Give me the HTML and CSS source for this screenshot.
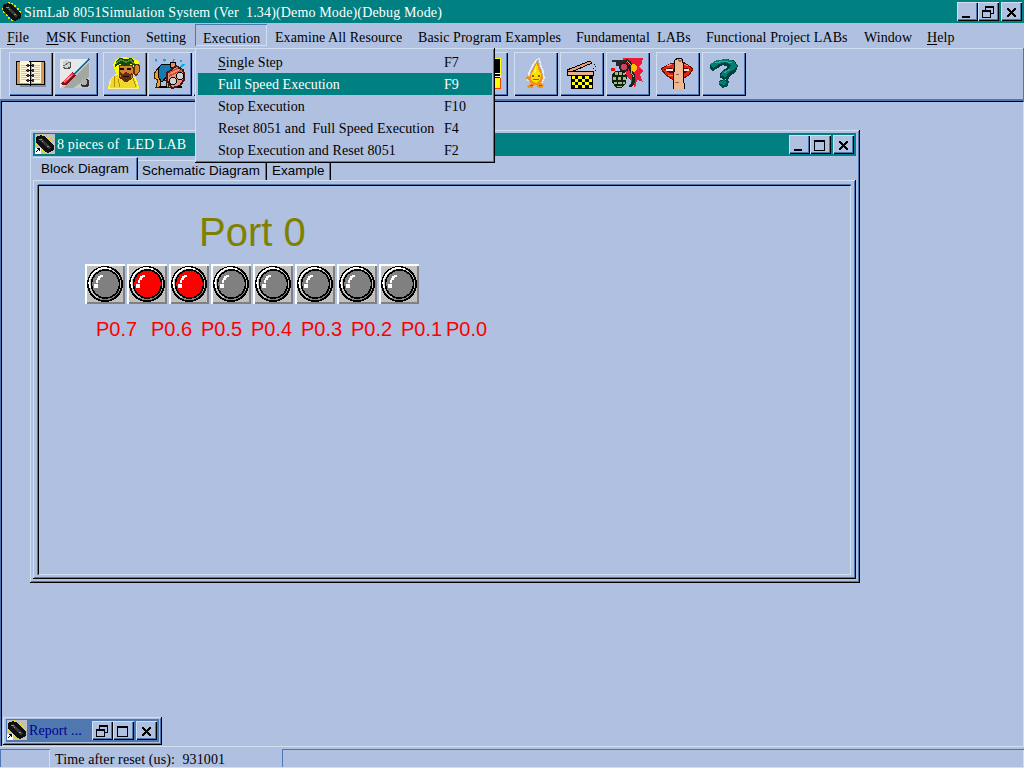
FILE: index.html
```html
<!DOCTYPE html>
<html lang="en">
<head>
<meta charset="utf-8">
<title>SimLab 8051 Simulation System</title>
<link rel="stylesheet" href="styles.css">
</head>
<body>
<svg class="defs" width="0" height="0" aria-hidden="true">
  <symbol id="chip" viewBox="0 0 20 20">
    <path d="M6 0h2v2H6zM9 1h2v2H9zM12 3h2v2h-2zM15 6h2v2h-2zM17 9h2v2h-2zM0 6h2v2H0zM1 9h2v2H1zM4 12h2v2H4zM6 15h2v2H6zM9 17h2v2H9z" fill="#e8e000"/>
    <path d="M1 3 6 1 11 3 19 12 19 16 13 19 9 17 1 8Z" fill="#101010"/>
    <path d="M4 5 7 4 16 14 13 15Z" fill="#383838"/>
    <path d="M4 5h3v1H4zM7 7h1v1H7zM12 12h2v1h-2z" fill="#909090"/>
  </symbol>
  <symbol id="chip-link" viewBox="0 0 20 20">
    <path d="M0 0h20v20H0z" fill="#c0c0c0"/>
    <use href="#chip" width="20" height="20"/>
    <path d="M0 14h6v6H0z" fill="#fff"/>
    <path d="M1 18h1v-1h1v-1h1v1h1v-3H2v1h1v1H2v1H1z" fill="#000"/>
  </symbol>
  <symbol id="min" viewBox="0 0 20 18"><path d="M5 13h8v2H5z"/></symbol>
  <symbol id="max" viewBox="0 0 20 18"><path fill-rule="evenodd" d="M4 4h11v11H4zM5 6v8h9V6z"/></symbol>
  <symbol id="restore" viewBox="0 0 20 18"><path fill-rule="evenodd" d="M7 3h9v8h-3v4H4V7h3zM8 5v2h5v3h2V5zM5 9v5h7V9z"/></symbol>
  <symbol id="close" viewBox="0 0 20 18"><path d="M6 5h2v1H6zM13 5h2v1h-2zM6 6h3v1H6zM12 6h3v1h-3zM7 7h3v1H7zM11 7h3v1h-3zM8 8h5v1H8zM9 9h3v1H9zM8 10h5v1H8zM7 11h3v1H7zM11 11h3v1h-3zM6 12h3v1H6zM12 12h3v1h-3zM6 13h2v1H6zM13 13h2v1h-2z"/></symbol>
  <symbol id="led" viewBox="0 0 40 40">
    <path d="M0 0h40v40H0z" fill="#808080"/><path d="M0 0h40v2H38v36H2v2H0z" fill="#fff"/><path d="M2 2h36v36H2z" fill="#c0c0c0"/>
    <circle cx="20" cy="20" r="17" fill="#c0c0c0" stroke="#000" stroke-width="2"/>
    <path d="M5 24A15.4 15.4 0 0 1 26 5.5" fill="none" stroke="#fff" stroke-width="1.6"/>
    <path d="M34 26A15.4 15.4 0 0 1 13 34" fill="none" stroke="#808080" stroke-width="1.5"/>
    <circle cx="20.5" cy="20" r="14" fill="currentColor" stroke="#000" stroke-width="1.6"/>
    <path d="M9 20h4v4H9zM11 16h2v3h-2zM12 14h3v2h-3zM13 12h3v2h-3zM15 11h3v2h-3z" fill="#fff"/>
  </symbol>
</svg>

<header class="titlebar">
  <svg class="app-icon"><use href="#chip"/></svg>
  <span class="title main-title">SimLab 8051Simulation System (Ver&nbsp; 1.34)(Demo Mode)(Debug Mode)</span>
  <div class="controls">
    <button><svg><use href="#min"/></svg></button><button><svg><use href="#restore"/></svg></button><button class="apart"><svg><use href="#close"/></svg></button>
  </div>
</header>

<nav class="menubar">
  <span class="m-file"><u>F</u>ile</span><span class="m-msk"><u>M</u>SK Function</span><span class="m-setting">Setting</span><span class="m-exec open">Execution</span><span class="m-exam">Examine All Resource</span><span class="m-basic">Basic Program Examples</span><span class="m-fund">Fundamental&nbsp; LABs</span><span class="m-func">Functional Project LABs</span><span class="m-window">Window</span><span class="m-help"><u>H</u>elp</span>
</nav>

<div class="toolbar">
  <button><svg viewBox="0 0 32 32">
    <path d="M5 6h26v24H5z" fill="#8090a0"/><path d="M1 4h29v24H1z" fill="#000"/><path d="M2 5h27v22H2z" fill="#d89858"/>
    <path d="M5 4h8l2 2v21l-2-1H5zM17 5h9v21h-9z" fill="#fff8d8"/>
    <path d="M6 8h6M6 10h6M6 12h6M6 14h6M6 16h6M6 18h6M6 20h6M6 22h6M19 8h6M19 10h6M19 12h6M19 14h6M19 16h6M19 18h6M19 20h6M19 22h6" stroke="#c0c0f0"/>
    <path d="M15 4h1v25h-1zM11 8h4v1h-4zM16 8h3v1h-3zM11 13h4v1h-4zM16 13h3v1h-3zM11 18h4v1h-4zM16 18h3v1h-3zM11 23h4v1h-4zM16 23h3v1h-3z" fill="#000"/>
    <path d="M12 7h2v3h-2zM17 7h2v3h-2zM12 12h2v3h-2zM17 12h2v3h-2zM12 17h2v3h-2zM17 17h2v3h-2zM12 22h2v3h-2zM17 22h2v3h-2z" fill="#303048"/>
  </svg></button>
  <button><svg viewBox="0 0 32 32">
    <path d="M1 2h30v29H1z" fill="#c8c8c8"/><path d="M1 2h29L2 31H1z" fill="#e8e8e8"/><path d="M30 5v15L14 31H5z" fill="#a0a8a0"/>
    <circle cx="8" cy="8" r="4.5" fill="#505050"/><circle cx="7.5" cy="7" r="3.8" fill="#d0d0d0"/><path d="M4 9 11 5" stroke="#707070"/>
    <circle cx="26" cy="26" r="4.5" fill="#303030"/><circle cx="25" cy="25" r="3" fill="#b0b0b0"/>
    <path d="M14 18 30 2" stroke="#306080" stroke-width="2"/><path d="M14 17 29 2" stroke="#80d0e8"/>
    <path d="M2 26 13 15l4 4L7 28H3z" fill="#801020"/><path d="M3 25 13 16l2 2L6 26z" fill="#f03840"/><path d="M5 25 13 18" stroke="#ffa0a0"/>
  </svg></button>
  <button class="split"><svg viewBox="0 0 32 32">
    <path d="M8 2 14 0 24 1 31 4 32 15 26 19 30 26 31 31H0L2 22 8 16 5 8Z" fill="#ffff00"/>
    <path d="M8 17 3 22 1 31h29l-3-11-8 3z" fill="#f0d828" stroke="#fff090"/>
    <path d="M11 8h13l2 5-2 8-6 4-7-5z" fill="#d08038" stroke="#603000"/><path d="M12 15 15 17 18 15 22 17 24 15 23 22 18 25 13 21z" fill="#603010"/>
    <path d="M8 4 12 1 18 2 24 1 26 4 27 9 23 7 17 9 12 7 7 10z" fill="#104810"/><path d="M8 6 13 3 18 5 23 3 26 7" fill="none" stroke="#50902c" stroke-width="1.5"/>
    <path d="M12 11h4v2h-4zM19 11h4v2h-4zM15 19h6v1h-6z" fill="#200800"/>
    <path d="M26 9 29 7 32 9 31 15 28 19 26 16z" fill="#d08038" stroke="#603000"/>
    <path d="M6 19v11M10 22l2 8M25 21l3 9" stroke="#b09000"/>
  </svg></button>
  <button><svg viewBox="0 0 32 32">
    <path d="M2 2h2v3H3zM10 2h3l-1 4-2-2zM20 2h2l-2 4h-1zM27 3h2v2h-2zM29 7h3l-3 3h-2z" fill="#10a8d8"/>
    <path d="M1 17 5 11l8-1 3 20h-3v-7H8l-1 7H3l2-7-4-2z" fill="#f0a028" stroke="#302000"/>
    <path d="M5 12 8 8l8-1 6 5-8 7-5 6-4-5z" fill="#1878b0" stroke="#000"/><circle cx="20" cy="8" r="3" fill="#e09060" stroke="#000"/>
    <path d="M14 16 23 9l7 4 2 8-5 8-8 2-5-7z" fill="#e89078" stroke="#401818" stroke-width="2"/>
    <path d="M16 16l9-5M16 19l13-6" stroke="#d04830" stroke-width="1.5"/>
    <circle cx="20" cy="24" r="3.5" fill="#d0d0d0" stroke="#000"/><circle cx="27" cy="19" r="3.5" fill="#d0d0d0" stroke="#000"/>
    <path d="M6 30h8M24 30h5" stroke="#000" stroke-width="2"/>
  </svg></button>
  <button></button>
  <button class="far"><svg viewBox="0 0 32 32"><path d="M0 1h32v31H0z" fill="#ff0"/><path d="M0 2h31v19H0z" fill="#000"/><path d="M26 16h6M25 19h7" stroke="#fff"/><path d="M31 21v10H0" fill="none" stroke="#f04000"/></svg></button>
  <button class="wide-gap"><svg viewBox="0 0 32 32">
    <path d="M20 1 22 9 24 14 25 21 23 26M18 2 14 8 10 16 9 24" fill="none" stroke="#e8ecf0" stroke-width="1.5"/>
    <path d="M19 2 20 9 23 15 24 21 22 26 25 28 24 31 19 31 18 28 15 28 14 31 9 31 8 29 12 27 10 23 7 22 8 19 11 20 12 14 16 8z" fill="#f09020"/>
    <path d="M18 6 19 12 22 17 21 23 17 26 12 23 12 18z" fill="#f8e000"/><path d="M17 8 17 14 14 18z" fill="#fff060"/>
    <path d="M13 18h2v2h-2zM19 18h2v2h-2zM14 22h6v1h-6zM11 28h3v1h-3zM20 28h3v1h-3z" fill="#a05010"/>
  </svg></button>
  <button class="gap2"><svg viewBox="0 0 32 32">
    <path d="M2 13 25 4 27 6 4 16z" fill="#e0a078" stroke="#000"/><path d="M2 14h26v4H2z" fill="#e8b090" stroke="#000"/>
    <path d="M6 18h22v14H6z" fill="#000"/><path d="M7 19h3v3H7zM13 19h4v3h-4zM20 19h4v3h-4zM10 22h3v3h-3zM17 22h3v3h-3zM24 22h3v3h-3zM7 25h3v3H7zM13 25h4v3h-4zM20 25h4v3h-4zM10 28h3v3h-3zM17 28h3v3h-3zM24 28h3v3h-3z" fill="#ff0"/>
    <path d="M29 7h1v1h-1zM30 9h1v1h-1zM28 11h1v1h-1zM30 13h1v1h-1z"/>
  </svg></button>
  <button class="gap2"><svg viewBox="0 0 32 32">
    <path d="M12 1h20l-1 5-3 4 4 4-3 4 3 7-6-2-2 8-4-7-4-4z" fill="#f01838"/><path d="M15 4h14M17 8h12M18 12h12M20 16h8M20 20h8" stroke="#903080" stroke-dasharray="1 2"/><circle cx="22" cy="11" r="4" fill="#ffc000"/>
    <path d="M1 3h5v2H1zM5 3h10v3H9v3H5z" fill="#282828"/><path d="M0 11h4v3H0z" fill="#f00"/>
    <circle cx="13" cy="10" r="4" fill="#d04060" stroke="#202020" stroke-width="2"/>
    <path d="M15 3 19 6 20 14 23 19 22 26 19 30" fill="none" stroke="#182818" stroke-width="3"/><path d="M16 4 20 8 20 15 23 20" fill="none" stroke="#b0b890"/>
    <path d="M4 14h9l3 5-1 7-4 5H5l-4-6V18z" fill="#102010"/>
    <path d="M4 15h3v3H4zM8 15h3v3H8zM12 16h2v2h-2zM2 20h3v3H2zM7 20h3v3H7zM12 20h3v3h-3zM3 25h3v2H3zM7 25h4v2H7zM12 25h2v2h-2zM6 29h5v1H6z" fill="#a8b880"/>
  </svg></button>
  <button class="wide-gap"><svg viewBox="0 0 32 32">
    <path d="M0 12 5 9 11 6 16 8 22 5 28 9 32 12 28 18 21 22 11 22 5 18z" fill="#e02810" stroke="#601000"/>
    <path d="M2 12 9 11 16 13 24 11 30 12 24 16 9 16z" fill="#600000"/><path d="M5 12h7v2H5zM22 12h6v2h-6z" fill="#f0e8e0"/><path d="M6 9 11 7M23 7 27 9M7 18h5" stroke="#ff8870"/>
    <path d="M12 32V24l1-9 1-12 3-2 4 1 1 4v13l1 7v6z" fill="#f0b890" stroke="#000"/><path d="M17 2 19 5 21 2M15 17h3M14 25h4" fill="none" stroke="#a06038"/>
  </svg></button>
  <button class="gap2"><svg viewBox="0 0 32 32">
    <path d="M3 8 8 4 17 2 27 3 31 9 29 15 23 19 21 23 13 21 13 16 18 12 21 10 16 8 11 11 6 14 3 12z" fill="#004040"/>
    <path d="M3 7 10 3 19 2 27 4 30 9 26 13 21 16 19 20 14 19 15 15 22 12 24 8 18 5 12 7 6 11z" fill="#008070"/><path d="M8 6 17 4 25 6M23 12l-6 4" fill="none" stroke="#38a898"/>
    <path d="M12 24 17 22 22 24 21 29 16 31 12 28z" fill="#004848"/><path d="M12 25 17 23 20 25 17 28 12 27z" fill="#008070"/>
  </svg></button>
</div>

<main class="desktop">
  <section class="window lab">
    <div class="wtitle"><svg class="win-icon"><use href="#chip-link"/></svg><span class="title lab-title">8 pieces of&nbsp; LED LAB</span>
      <div class="controls"><button><svg><use href="#min"/></svg></button><button><svg><use href="#max"/></svg></button><button class="apart"><svg><use href="#close"/></svg></button></div>
    </div>
    <div class="tabs"><span class="tab active">Block Diagram</span><span class="tab schem">Schematic Diagram</span><span class="tab example">Example</span></div>
    <div class="page"><div class="panel">
      <h1>Port 0</h1>
      <div class="leds">
        <svg><use href="#led"/></svg><svg class="on"><use href="#led"/></svg><svg class="on"><use href="#led"/></svg><svg><use href="#led"/></svg><svg><use href="#led"/></svg><svg><use href="#led"/></svg><svg><use href="#led"/></svg><svg><use href="#led"/></svg>
      </div>
      <div class="pins"><span class="first">P0.7</span><span>P0.6</span><span>P0.5</span><span>P0.4</span><span>P0.3</span><span>P0.2</span><span class="near">P0.1</span><span>P0.0</span></div>
    </div></div>
  </section>
  <section class="window report">
    <div class="wtitle inactive"><svg class="win-icon"><use href="#chip-link"/></svg><span class="title report-title">Report ...</span>
      <div class="controls"><button><svg><use href="#restore"/></svg></button><button><svg><use href="#max"/></svg></button><button class="apart"><svg><use href="#close"/></svg></button></div>
    </div>
  </section>
</main>

<footer class="status"><div class="s1"></div><div class="s2"><span>Time after reset (us):&nbsp; 931001</span></div><div class="s3"></div></footer>

<div class="dropdown">
  <div class="item"><span><u>S</u>ingle Step</span><kbd>F7</kbd></div>
  <div class="item selected"><span>Full Speed Execution</span><kbd>F9</kbd></div>
  <div class="item"><span>Stop Execution</span><kbd>F10</kbd></div>
  <div class="item"><span>Reset 8051 and&nbsp; Full Speed Execution</span><kbd>F4</kbd></div>
  <div class="item"><span>Stop Execution and Reset 8051</span><kbd>F2</kbd></div>
</div>
</body>
</html>
```
FILE: styles.css
```css
:root { --face: #b0c0e0; --light: #d0e0f0; --shade: #5078b0; --teal: #008080; }
* { box-sizing: border-box; }
body { margin: 0; width: 1024px; height: 768px; overflow: hidden; background: var(--face); color: #000; font: 14px/18px "Liberation Serif", serif; letter-spacing: .07px; display: flex; flex-direction: column; position: relative; white-space: nowrap; }
.defs { position: absolute; }
svg { display: block; shape-rendering: crispEdges; }
u { text-underline-offset: 2px; text-decoration-thickness: 1px; }
button { font: inherit; padding: 0; margin: 0; border: 0; background: var(--face); flex: none; }

.titlebar { height: 23px; flex: none; background: var(--teal); color: #fff; display: flex; padding: 2px 2px 0 1px; }
.app-icon { width: 22px; height: 20px; }
.title { padding-left: 1px; line-height: 22px; }
.main-title { letter-spacing: .155px; }
.controls { display: flex; margin-left: auto; }
.controls button { width: 21px; height: 19px; box-shadow: inset 1px 1px var(--light), inset -1px -1px #000, inset -2px -2px var(--shade); }
.controls svg { width: 20px; height: 18px; }
.controls .apart { margin-left: 2px; }

.menubar { height: 25px; flex: none; display: flex; padding-top: 1px; }
.menubar span { height: 22px; line-height: 27px; padding-left: 8px; flex: none; }
.m-file { width: 39px; margin-left: -1px; }
.m-msk { width: 100px; }
.m-setting { width: 57px; }
.m-exec { width: 72px; }
.m-exam { width: 143px; }
.m-basic { width: 158px; }
.m-fund { width: 130px; }
.m-func { width: 158px; }
.m-window { width: 63px; }
.menubar .open { line-height: 29px; box-shadow: inset 1px 1px var(--shade), inset -1px -1px var(--light); }

.toolbar { height: 53px; flex: none; display: flex; align-items: flex-start; padding: 4px 0 0 9px; border: solid var(--shade); border-width: 0 1px 2px 0; box-shadow: inset 1px 1px var(--light); }
.toolbar button { display: flex; align-items: flex-start; width: 44px; height: 44px; padding: 5px 0 0 6px; margin-right: 1px; box-shadow: inset 1px 1px var(--light), inset -1px -1px #000, inset -2px -2px var(--shade); }
.toolbar svg { width: 32px; height: 32px; flex: none; }
.toolbar button + button { padding-left: 5px; }
.toolbar .split { margin-left: 4px; }
.toolbar .far { margin-left: 226px; }
.toolbar .wide-gap { margin-left: 5px; }
.toolbar .gap2 { margin-left: 1px; }

.desktop { flex: 1; position: relative; border: 1px solid #000; border-width: 1px 1px 0 1px; border-right-color: var(--light); margin-left: 1px; box-shadow: -1px 0 var(--shade); }
.window { position: absolute; background: var(--face); border: solid #000; border-width: 0 1px 1px 0; box-shadow: inset 1px 1px var(--light), inset -1px -1px var(--shade); }
.lab { left: 28px; top: 28px; width: 830px; height: 453px; padding: 3px; display: flex; flex-direction: column; }
.wtitle { height: 23px; flex: none; background: var(--teal); color: #fff; display: flex; padding: 1px 2px 0 2px; }
.win-icon { width: 20px; height: 20px; margin-right: 1px; }
.wtitle .controls { margin-top: 1px; }
.lab-title { letter-spacing: .15px; }
.inactive { background: var(--shade); color: #000090; padding-left: 1px; }
.report { left: 1px; top: 615px; width: 159px; height: 28px; padding: 2px 2px 2px 3px; }

.tabs { height: 24px; flex: none; display: flex; align-items: flex-end; margin-top: 1px; font: 13.4px/19px "Liberation Sans", sans-serif; }
.tab { height: 21px; padding-left: 5px; line-height: 20px; border-top: 1px solid var(--light); border-bottom: 1px solid var(--light); border-right: 1px solid #000; box-shadow: inset -1px 0 var(--shade); }
.tab.active { width: 105px; height: 24px; border-bottom: 0; padding-left: 8px; line-height: 22px; }
.schem { width: 129px; padding-left: 4px; }
.example { width: 64px; }
.page { flex: 1; margin-top: -1px; border: solid #000; border-width: 0 1px 1px 0; box-shadow: inset 1px 1px var(--light), inset -1px -1px var(--shade); padding: 5px 4px 3px 5px; }
.panel { height: 100%; border: solid; border-color: #000 var(--light) var(--light) #000; box-shadow: 0 -1px var(--shade), -1px 0 var(--shade); border-width: 1px; padding: 23px 0 0 46px; font-family: "Liberation Sans", sans-serif; letter-spacing: 0; }
h1 { margin: 0 0 9px 114px; font-weight: 400; font-size: 40px; line-height: 46px; color: #808000; }
.leds { display: flex; gap: 2px; color: #808080; }
.leds svg { width: 40px; height: 40px; }
.leds .on { color: #f00; }
.pins { display: flex; color: #f00; font-size: 20px; line-height: 24px; padding: 13px 0 0 11px; }
.pins span { width: 50px; flex: none; }
.pins .first { width: 55px; }
.pins .near { width: 45px; }

.status { height: 22px; flex: none; display: flex; border-top: 1px solid var(--light); padding-top: 2px; border-bottom: 1px solid var(--light); }
.s1 { width: 50px; box-shadow: inset 1px 1px var(--shade), inset -1px 0 var(--light); }
.s2 { width: 232px; padding-left: 5px; line-height: 21px; letter-spacing: .13px; }
.s3 { flex: 1; box-shadow: inset 1px 1px var(--shade), inset -1px 0 var(--light); }

.dropdown { position: absolute; left: 195px; top: 48px; width: 300px; height: 115px; padding: 3px 2px 3px 3px; background: var(--face); border: solid #000; border-width: 0 1px 1px 0; box-shadow: inset 1px 1px var(--light), inset -1px -1px var(--shade); }
.item { height: 22px; line-height: 23px; padding-left: 20px; display: flex; }
.item span { width: 226px; }
.item kbd { font: inherit; }
.selected { background: var(--teal); color: #fff; }
```
